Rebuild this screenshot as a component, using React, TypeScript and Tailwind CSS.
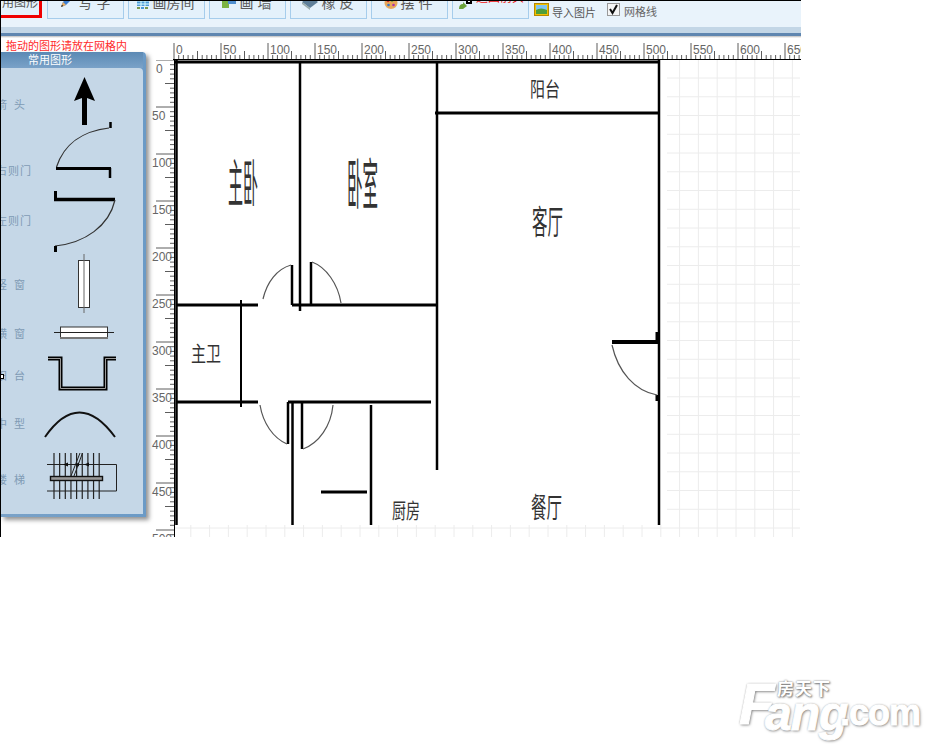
const CJK = '"Liberation Sans","Noto Sans CJK SC",sans-serif';

function range(n: number) {
  return Array.from({ length: n }, (_, i) => i);
}

function IconPencil() {
  return (
    <svg width="18" height="13" viewBox="0 3 18 13">
      <path d="M3 13 L5 8 L12 0 L16 3 L8 11 Z" fill="#3f7fd0" />
      <path d="M3 13 L5 8 L8 11 Z" fill="#f0b060" />
      <path d="M3 13 L4 10.5 L5.5 12 Z" fill="#333" />
    </svg>
  );
}
function IconRoom() {
  return (
    <svg width="14" height="12" viewBox="0 0 14 12">
      <rect x="1" y="0" width="12" height="8" fill="#4f9ad8" />
      <path d="M1 3h12M1 6h12M5 0v8M9 0v8" stroke="#dff" strokeWidth="1" />
      <rect x="1" y="9" width="3" height="2" fill="#7a9a50" />
      <rect x="5" y="9" width="3" height="2" fill="#4f9ad8" />
      <rect x="9" y="9" width="3" height="2" fill="#7a9a50" />
    </svg>
  );
}
function IconWall() {
  return (
    <svg width="16" height="12" viewBox="0 0 16 12">
      <rect x="1" y="3" width="7" height="7" fill="#7cb342" />
      <rect x="7" y="1" width="8" height="5" fill="#4f8fd0" />
    </svg>
  );
}
function IconEraser() {
  return (
    <svg width="18" height="12" viewBox="0 1 18 12">
      <path d="M1 5 L9 -1 L17 5 L9 11 Z" fill="#5f7f99" />
      <path d="M1 5 L9 11 L9 13 L1 7 Z" fill="#9aa" />
    </svg>
  );
}
function IconPalette() {
  return (
    <svg width="14" height="12" viewBox="0 0 14 12">
      <ellipse cx="7" cy="5" rx="6.5" ry="6" fill="#e8a85a" />
      <circle cx="4" cy="3" r="1.3" fill="#d33" />
      <circle cx="8" cy="2.5" r="1.3" fill="#4a4" />
      <circle cx="4.5" cy="7" r="1.3" fill="#37c" />
      <circle cx="9.5" cy="7" r="1.3" fill="#a3a" />
    </svg>
  );
}

function ToolButton({ icon, label }: { icon: React.ReactNode; label: string }) {
  return (
    <div className="flex h-[18px] w-[77px] items-end justify-center gap-[3px] overflow-hidden border border-t-0 border-[#a6cdec] bg-[#e4f1fb] pb-[8px] pr-[3px]">
      <span className="flex h-3 items-end">{icon}</span>
      <span className="whitespace-nowrap text-[14px] leading-[14px] text-[#5a5a5a]">{label}</span>
    </div>
  );
}

function Toolbar() {
  return (
    <div className="h-[38px] w-full shrink-0">
      <div className="flex h-[27px] items-start border-t border-black bg-[#e9f3fb]">
        <div className="ml-[-6px] flex h-[17px] w-[47px] items-end justify-end overflow-hidden border-[3px] border-t-0 border-[#f00000] bg-[#e4f1fb] pb-[5px] pr-[1px]">
          <span className="whitespace-nowrap text-[12px] leading-[13px] text-[#555]">用图形</span>
        </div>
        <div className="ml-[5px] flex gap-[4px]">
          <ToolButton icon={<IconPencil />} label="写 字" />
          <ToolButton icon={<IconRoom />} label="画房间" />
          <ToolButton icon={<IconWall />} label="画 墙" />
          <ToolButton icon={<IconEraser />} label="橡 皮" />
          <ToolButton icon={<IconPalette />} label="摆 件" />
          <div className="flex h-[18px] w-[77px] items-start gap-[3px] overflow-hidden border border-t-0 border-[#a6cdec] bg-[#e4f1fb] pl-[4px]">
            <svg width="16" height="10" viewBox="0 0 16 10" className="shrink-0">
              <path d="M2 8 Q2 3 6 3 L6 1 L10 5 L6 8 Z" fill="#6aa23a" />
              <rect x="9" y="-2" width="6" height="5" fill="#000" />
              <rect x="11" y="-2" width="2" height="3" fill="#fff" />
            </svg>
            <span className="mt-[-9px] whitespace-nowrap text-[12px] leading-[13px] text-[#f01010]">退回前头</span>
          </div>
        </div>
        <div className="ml-[5px] flex items-start pt-[2px]">
          <svg width="15" height="13" viewBox="0 0 15 13" className="shrink-0">
            <rect x="0.5" y="0.5" width="14" height="12" fill="#f3c000" stroke="#b58a00" />
            <rect x="2" y="2" width="11" height="9" fill="#7fc4ef" />
            <path d="M2 11 L2 7 Q7 4 13 7 L13 11 Z" fill="#4f9f3a" />
          </svg>
          <span className="ml-[3px] mt-[4px] whitespace-nowrap text-[11px] leading-[13px] text-[#555]">导入图片</span>
          <span className="ml-[11px] flex h-[13px] w-[13px] items-center justify-center border border-[#999] bg-[#f5f5f5]">
            <svg width="11" height="11" viewBox="0 0 11 11">
              <path d="M2 5 L4.5 9 L9 1" fill="none" stroke="#111" strokeWidth="2" />
            </svg>
          </span>
          <span className="ml-[4px] mt-[3px] whitespace-nowrap text-[11px] leading-[13px] text-[#666]">网格线</span>
        </div>
      </div>
      <div className="h-[6px] bg-[#c3d6e6]" />
      <div className="h-[3px] bg-[#5f86b0]" />
      <div className="h-[2px] bg-gradient-to-b from-[#bbb] to-white" />
    </div>
  );
}

const labelThree = "flex h-[14px] w-[32px] shrink-0 justify-end whitespace-nowrap pr-[1px] text-[11px] leading-[14px] tracking-[1px] text-[#7f9bb5]";
const labelTwo = "flex h-[14px] w-[32px] shrink-0 justify-end whitespace-nowrap pr-[6px] text-[11px] leading-[14px] tracking-[2px] text-[#7f9bb5]";

function PanelShapes() {
  const stairs = range(9).map((i) => 53 + i * 5.65);
  return (
    <svg width="110" height="446" viewBox="32 68 110 446" className="shrink-0">
      {/* arrow */}
      <path d="M83.5 77 L94 101 L86 98 L86 125 L81 125 L81 98 L73 101 Z" fill="#000" />
      {/* right door */}
      <path d="M55.5 167 C63 144 82 131 108 128" fill="none" stroke="#333" strokeWidth="1.2" />
      <path d="M55 168.5 H110" stroke="#000" strokeWidth="3" />
      <path d="M109 168 V178" stroke="#000" strokeWidth="2.5" />
      <path d="M109.5 122 V128" stroke="#000" strokeWidth="2.5" />
      {/* left door */}
      <path d="M53 199.5 H114" stroke="#000" strokeWidth="3.5" />
      <path d="M54.5 191 V201" stroke="#000" strokeWidth="3" />
      <path d="M114 200 C108 226 84 243 54 246" fill="none" stroke="#333" strokeWidth="1.2" />
      <path d="M54.5 246 V252" stroke="#000" strokeWidth="3" />
      {/* vertical window */}
      <rect x="77.5" y="260.5" width="11" height="47" fill="#fff" stroke="#333" />
      <path d="M83 254 V313" stroke="#666" strokeWidth="1" />
      {/* horizontal window */}
      <rect x="59.5" y="327" width="47" height="11" fill="#fff" stroke="#333" />
      <path d="M59 338 H107" stroke="#777" strokeWidth="2" />
      <path d="M53 332.5 H113" stroke="#222" strokeWidth="1" />
      {/* balcony */}
      <path d="M47 358.5 H59.5 V388.5 H104.5 V358.5 H115" fill="none" stroke="#000" strokeWidth="4" />
      <path d="M47 358.5 H59.5 V388.5 H104.5 V358.5 H115" fill="none" stroke="#999" strokeWidth="1" />
      {/* arch */}
      <path d="M44 437 Q78 388 114 437" fill="none" stroke="#111" strokeWidth="2" />
      {/* stairs */}
      {stairs.map((x) => (
        <path key={x} d={`M${x} 453 V499`} stroke="#222" strokeWidth="1.2" />
      ))}
      <path d="M46 464.5 H115.5 V491 H46" fill="none" stroke="#222" strokeWidth="1" />
      <rect x="49.5" y="476.5" width="52" height="4" fill="#999" stroke="#111" strokeWidth="1.4" />
      <path d="M70 476 L79 453 M73 476 L81.5 453" stroke="#222" strokeWidth="1" />
      <path d="M62 464.5 L67 462.5 V466.5 Z M83 464.5 L88 462.5 V466.5 Z M74 464.5 L78 462.5 V466.5 Z" fill="#111" />
    </svg>
  );
}

function Panel() {
  return (
    <div className="flex h-[465px] w-[145px] flex-col overflow-hidden rounded-tr-[4px] bg-gradient-to-r from-[#7aa2c8] to-[#6b9ac6] pb-[3px] pr-[3px] shadow-[3px_3px_4px_rgba(90,90,90,0.65)]">
      <div className="flex h-[16px] shrink-0 items-center justify-center bg-gradient-to-b from-[#5b89b4] to-[#7aa2c8] pr-[44px] text-[11px] leading-[16px] text-white">
        常用图形
      </div>
      <div className="flex h-[446px] overflow-hidden rounded-tr-[4px] bg-[#c5d7e7]">
        <div className="flex w-[32px] shrink-0 flex-col">
          <div className={`${labelTwo} mt-[30px]`}>箭 头</div>
          <div className={`${labelThree} mt-[52px]`}>右则门</div>
          <div className={`${labelThree} mt-[36px]`}>左则门</div>
          <div className={`${labelTwo} mt-[50px]`}>竖 窗</div>
          <div className={`${labelTwo} mt-[35px]`}>横 窗</div>
          <div className={`${labelTwo} mt-[28px]`}>阳 台</div>
          <div className={`${labelTwo} mt-[34px]`}>中 型</div>
          <div className={`${labelTwo} mt-[42px]`}>楼 梯</div>
        </div>
        <PanelShapes />
      </div>
    </div>
  );
}

function TopRuler() {
  return (
    <svg width="628" height="22" viewBox="173 38 628 22" className="ml-[23px] block shrink-0">
      {range(136).map((i) => {
        const x = 174 + i * 4.7;
        const top = i % 10 === 0 ? 43 : i % 5 === 0 ? 51 : 55;
        return <path key={i} d={`M${x} ${top} V59`} stroke="#333" strokeWidth="0.8" />;
      })}
      <path d="M173 59.5 H801" stroke="#000" strokeWidth="1" />
      {range(14).map((i) => (
        <text key={i} x={176 + i * 47} y={54} fontSize="12" fill="#666" fontFamily="Liberation Sans, sans-serif">
          {i * 50}
        </text>
      ))}
    </svg>
  );
}

function LeftRuler() {
  return (
    <svg width="25" height="477" viewBox="150 60 25 477" className="block shrink-0">
      {range(102).map((i) => {
        const y = 60 + i * 4.7;
        const left = i % 10 === 0 ? 156 : i % 5 === 0 ? 165 : 170;
        return <path key={i} d={`M${left} ${y} H174`} stroke="#333" strokeWidth="0.8" />;
      })}
      <path d="M174.5 60 V537" stroke="#000" strokeWidth="1" />
      {range(11).map((i) => (
        <text key={i} x={i === 0 ? 156 : 152} y={73 + i * 47} fontSize="12" fill="#666" fontFamily="Liberation Sans, sans-serif">
          {i * 50}
        </text>
      ))}
    </svg>
  );
}

function RoomText({ x, y, sy, size, children }: { x: number; y: number; sy: number; size: number; children: string }) {
  return (
    <text transform={`translate(${x} ${y}) scale(1 ${sy})`} fontSize={size} fill="#333" fontFamily={CJK}>
      {children}
    </text>
  );
}

function FloorPlan() {
  return (
    <svg width="626" height="477" viewBox="175 60 626 477" className="block shrink-0">
      {range(26).map((i) => (
        <path key={`h${i}`} d={`M175 ${59.25 + i * 18.75} H800`} stroke="#ececec" strokeWidth="1" />
      ))}
      {range(34).map((i) => (
        <path key={`v${i}`} d={`M${172 + i * 18.8} 60 V537`} stroke="#ececec" strokeWidth="1" />
      ))}
      <rect x="170" y="60" width="497" height="465" fill="#fff" />

      <g stroke="#000" fill="none">
        <path d="M175 62 H660" strokeWidth="3" />
        <path d="M176.5 60 V525" strokeWidth="2.5" />
        <path d="M659 60 V525" strokeWidth="2.5" />
        <path d="M300 62 V311" strokeWidth="2.5" />
        <path d="M437 62 V470" strokeWidth="2.5" />
        <path d="M435 113 H659" strokeWidth="3" />
        <path d="M176 305 H258" strokeWidth="3" />
        <path d="M292 305 H437" strokeWidth="3" />
        <path d="M241 300 V407" strokeWidth="2" />
        <path d="M292 265 V305" strokeWidth="2.5" />
        <path d="M311 262 V305" strokeWidth="2.5" />
        <path d="M176 402 H258" strokeWidth="3" />
        <path d="M288 402 H431" strokeWidth="3" />
        <path d="M288 402 V444" strokeWidth="2.5" />
        <path d="M292.5 402 V525" strokeWidth="2.5" />
        <path d="M302 402 V449" strokeWidth="2.5" />
        <path d="M371 405 V525" strokeWidth="2.5" />
        <path d="M321 492 H367" strokeWidth="3" />
        <path d="M612 342 H659" strokeWidth="4" />
        <path d="M657 332 V342" strokeWidth="3" />
        <path d="M657 395 V401" strokeWidth="3" />
      </g>
      <g stroke="#555" strokeWidth="1.2" fill="none">
        <path d="M263 299 C267 282 277 269 291 265" />
        <path d="M312 262 C326 267 338 284 341 303" />
        <path d="M260 405 C263 423 273 438 287 444" />
        <path d="M303 449 C319 443 331 426 333 405" />
        <path d="M612 345 C618 372 635 391 657 395" />
      </g>

      <RoomText x={530} y={97} sy={1.35} size={15}>阳台</RoomText>
      <RoomText x={228} y={202} sy={3.4} size={15}>主卧</RoomText>
      <RoomText x={347} y={204} sy={3.5} size={15.5}>卧室</RoomText>
      <RoomText x={532} y={234} sy={2.1} size={15.5}>客厅</RoomText>
      <RoomText x={191} y={361} sy={1.4} size={15}>主卫</RoomText>
      <RoomText x={392} y={518} sy={1.5} size={14}>厨房</RoomText>
      <RoomText x={531} y={518} sy={1.8} size={15.5}>餐厅</RoomText>
    </svg>
  );
}

const logoLatin = "absolute font-bold [font-family:'Liberation_Sans',sans-serif] [-webkit-text-stroke:1px_#fff] [text-shadow:0_0_2px_#888,1px_1px_3px_#777]";

export default function App() {
  return (
    <div className="relative h-[750px] w-[938px] overflow-hidden bg-white" style={{ fontFamily: CJK }}>
      <div className="flex h-[537px] w-[801px] flex-col overflow-hidden border-l border-black bg-white">
        <Toolbar />
        <div className="flex min-h-0 flex-1">
          <div className="relative w-[149px] shrink-0">
            <div className="h-[14px] whitespace-nowrap pl-[5px] text-[11px] leading-[16px] text-[#ff2a2a]">
              拖动的图形请放在网格内
            </div>
            <Panel />
            <div className="absolute left-[-1px] top-[336px] h-[5px] w-[4px] border border-black bg-white" />
          </div>
          <div className="flex min-w-0 flex-1 flex-col">
            <TopRuler />
            <div className="flex">
              <LeftRuler />
              <FloorPlan />
            </div>
          </div>
        </div>
      </div>

      <div className="absolute left-[739px] top-[672px] h-[70px] w-[190px] select-none text-white">
        <span className={`${logoLatin} left-0 top-[2px] text-[58px] italic leading-[60px] tracking-[-3px]`}>F</span>
        <span className={`${logoLatin} left-[26px] top-[17px] text-[48px] italic leading-[50px] tracking-[-1px]`}>ang</span>
        <span className={`${logoLatin} left-[101px] top-[21px] text-[36px] leading-[40px] tracking-[-1px]`}>.com</span>
        <span className="absolute left-[38px] top-[9px] whitespace-nowrap text-[17px] font-bold leading-[18px] tracking-[1px] [text-shadow:0_0_2px_#777,1px_1px_2px_#777]">
          房天下
        </span>
      </div>
    </div>
  );
}
